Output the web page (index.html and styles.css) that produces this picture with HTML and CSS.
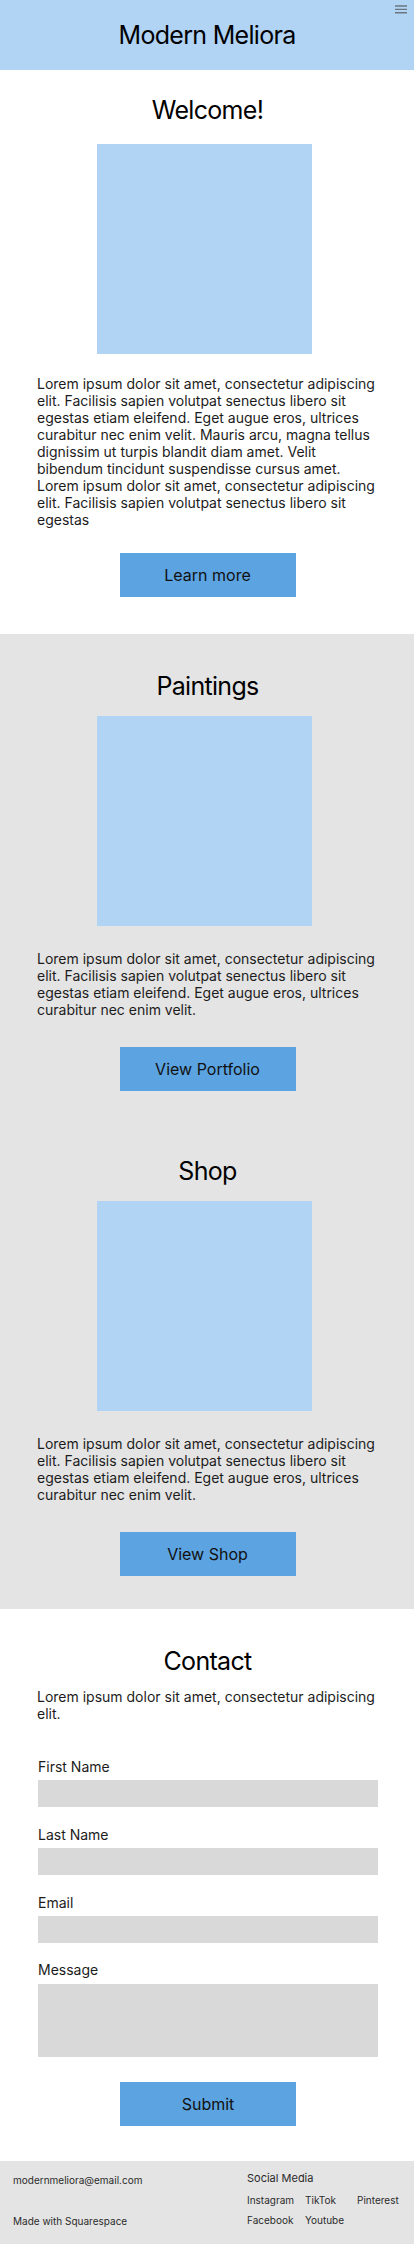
FILE: index.html
```html
<!DOCTYPE html>
<html lang="en">
<head>
<meta charset="utf-8">
<meta name="viewport" content="width=device-width, initial-scale=1">
<title>Modern Meliora</title>
<link rel="stylesheet" href="styles.css">
</head>
<body>
<header class="topbar">
  <h1 class="site-title">Modern Meliora</h1>
  <button class="menu-btn" aria-label="Menu">
    <svg width="12" height="9" viewBox="0 0 12 9"><path d="M0 1h12M0 4.4h12M0 7.8h12" stroke="#6b7580" stroke-width="1.4" fill="none"/></svg>
  </button>
</header>

<main>
  <section class="band band--white welcome">
    <h2 class="heading">Welcome!</h2>
    <div class="picture picture--first"></div>
    <p class="copy copy--first">Lorem ipsum dolor sit amet, consectetur adipiscing elit. Facilisis sapien volutpat senectus libero sit egestas etiam eleifend. Eget augue eros, ultrices curabitur nec enim velit. Mauris arcu, magna tellus dignissim ut turpis blandit diam amet. Velit bibendum tincidunt suspendisse cursus amet. Lorem ipsum dolor sit amet, consectetur adipiscing elit. Facilisis sapien volutpat senectus libero sit egestas</p>
    <a class="cta cta--first" href="#">Learn more</a>
  </section>

  <section class="band band--gray gallery">
    <div class="block">
      <h2 class="heading">Paintings</h2>
      <div class="picture"></div>
      <p class="copy">Lorem ipsum dolor sit amet, consectetur adipiscing elit. Facilisis sapien volutpat senectus libero sit egestas etiam eleifend. Eget augue eros, ultrices curabitur nec enim velit.</p>
      <a class="cta" href="#">View Portfolio</a>
    </div>
    <div class="block block--next">
      <h2 class="heading">Shop</h2>
      <div class="picture"></div>
      <p class="copy">Lorem ipsum dolor sit amet, consectetur adipiscing elit. Facilisis sapien volutpat senectus libero sit egestas etiam eleifend. Eget augue eros, ultrices curabitur nec enim velit.</p>
      <a class="cta" href="#">View Shop</a>
    </div>
  </section>

  <section class="band band--white contact">
    <h2 class="heading">Contact</h2>
    <p class="copy copy--contact">Lorem ipsum dolor sit amet, consectetur adipiscing elit.</p>
    <form class="form">
      <label class="field field--first">
        <span class="field-label">First Name</span>
        <span class="field-box"></span>
      </label>
      <label class="field">
        <span class="field-label">Last Name</span>
        <span class="field-box"></span>
      </label>
      <label class="field">
        <span class="field-label">Email</span>
        <span class="field-box"></span>
      </label>
      <label class="field field--message">
        <span class="field-label">Message</span>
        <span class="field-box field-box--tall"></span>
      </label>
      <button type="button" class="cta cta--submit">Submit</button>
    </form>
  </section>
</main>

<footer class="footer">
  <div class="footer-left">
    <div class="footer-text">modernmeliora@email.com</div>
    <div class="footer-text footer-made">Made with Squarespace</div>
  </div>
  <div class="footer-right">
    <div class="footer-heading">Social Media</div>
    <div class="social">
      <a class="social-link" href="#">Instagram</a>
      <a class="social-link" href="#">TikTok</a>
      <a class="social-link" href="#">Pinterest</a>
      <a class="social-link" href="#">Facebook</a>
      <a class="social-link" href="#">Youtube</a>
    </div>
  </div>
</footer>
</body>
</html>
```

FILE: styles.css
```css
* { box-sizing: border-box; }

html, body {
  margin: 0;
  padding: 0;
}

body {
  width: 414px;
  font-family: "Inter", "Noto Sans", "Liberation Sans", sans-serif;
  color: #1c1c1c;
  background: #ffffff;
}

.topbar {
  position: relative;
  height: 70px;
  background: #b1d4f5;
  display: flex;
  align-items: center;
  justify-content: center;
}

.site-title {
  margin: 0;
  font-size: 25px;
  line-height: 32px;
  font-weight: 400;
  letter-spacing: -0.7px;
  color: #000;
}

.menu-btn {
  position: absolute;
  top: 5px;
  right: 7px;
  padding: 0;
  border: 0;
  background: none;
  display: block;
  line-height: 0;
}

.band {
  display: flex;
  flex-direction: column;
  padding-left: 37px;
  padding-right: 36px;
}

.band--white { background: #ffffff; }
.band--gray { background: #e4e4e4; }

.block {
  display: flex;
  flex-direction: column;
}

.heading {
  margin: 0;
  font-size: 25px;
  line-height: 32px;
  font-weight: 400;
  letter-spacing: -0.7px;
  text-align: center;
  color: #000;
}

.picture {
  width: 215px;
  height: 210px;
  margin-top: 14px;
  margin-left: 60px;
  background: #b1d4f5;
}

.copy {
  margin: 24px 0 0;
  font-size: 14px;
  line-height: 17px;
  color: #1c1c1c;
}

.cta {
  display: flex;
  align-items: center;
  justify-content: center;
  align-self: center;
  width: 176px;
  height: 44px;
  margin-top: 29px;
  background: #5ca3e1;
  color: #111;
  font-family: inherit;
  font-size: 16px;
  font-weight: 400;
  text-decoration: none;
  border: 0;
  padding: 0;
}

/* Welcome */
.welcome { padding-top: 24px; padding-bottom: 37px; }
.picture--first { margin-top: 18px; }
.copy--first { margin-top: 21px; }
.cta--first { margin-top: 25px; }

/* Gallery */
.gallery { padding-top: 36px; padding-bottom: 33px; }
.block--next { margin-top: 64px; }

/* Contact */
.contact { padding-top: 36px; padding-bottom: 35px; }
.copy--contact { margin-top: 11px; }

.form {
  display: flex;
  flex-direction: column;
  padding-left: 1px;
}

.field {
  display: flex;
  flex-direction: column;
  margin-top: 19px;
}

.field--first { margin-top: 36px; }
.field--message { margin-top: 18px; }

.field-label {
  font-size: 14px;
  line-height: 17px;
  color: #1c1c1c;
}

.field-box {
  display: block;
  height: 27px;
  margin-top: 5px;
  background: #d9d9d9;
}

.field-box--tall {
  height: 73px;
  margin-top: 6px;
}

.cta--submit {
  margin-top: 25px;
}

/* Footer */
.footer {
  display: flex;
  height: 84px;
  background: #e4e4e4;
  padding: 11px 0 0 13px;
  color: #2b2b2b;
}

.footer-left {
  width: 234px;
  padding-top: 2px;
  display: flex;
  flex-direction: column;
}

.footer-text {
  font-size: 10px;
  line-height: 12px;
}

.footer-made { margin-top: 29px; }

.footer-right {
  display: flex;
  flex-direction: column;
}

.footer-heading {
  font-size: 11px;
  line-height: 13px;
}

.social {
  display: grid;
  grid-template-columns: 58px 52px auto;
  row-gap: 8px;
  margin-top: 9px;
}

.social-link {
  font-size: 10px;
  line-height: 12px;
  color: #2b2b2b;
  text-decoration: none;
}
```
